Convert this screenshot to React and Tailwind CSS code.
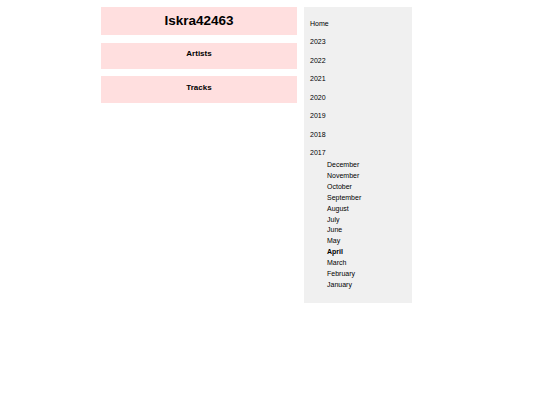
import React from 'react';

const years = ['2023', '2022', '2021', '2020', '2019', '2018'];
const months = ['December', 'November', 'October', 'September', 'August', 'July', 'June', 'May', 'April', 'March', 'February', 'January'];

export default function App() {
  return (
    <div className="min-h-screen bg-white text-black font-['Liberation_Sans',Arial,sans-serif]">
      <div className="flex items-start gap-[7px] pl-[101px] pt-[7px]">
        {/* left column */}
        <div className="w-[196px] flex flex-col">
          <div className="h-[28px] bg-[#ffdfdf] flex items-center justify-center">
            <h1 className="text-[13.5px] font-bold leading-none">Iskra42463</h1>
          </div>
          <div className="mt-[8px] h-[26px] bg-[#ffdfdf] flex justify-center pt-[7px]">
            <h2 className="text-[8px] font-bold leading-none">Artists</h2>
          </div>
          <div className="mt-[7px] h-[27px] bg-[#ffdfdf] flex justify-center pt-[7.5px]">
            <h2 className="text-[8px] font-bold leading-none">Tracks</h2>
          </div>
        </div>

        {/* sidebar */}
        <nav className="w-[108px] bg-[#f0f0f0] pl-[6px] pt-[10.5px] pb-[12.5px] text-[7px]">
          <ul className="flex flex-col gap-[7.5px]">
            <li className="leading-[11px]">Home</li>
            {years.map((y) => (
              <li key={y} className="leading-[11px]">{y}</li>
            ))}
            <li className="leading-[11px]">
              2017
              <ul className="pl-[17px] mt-[2px]">
                {months.map((m) => (
                  <li key={m} className={`leading-[10.9px] ${m === 'April' ? 'font-bold' : ''}`}>{m}</li>
                ))}
              </ul>
            </li>
          </ul>
        </nav>
      </div>
    </div>
  );
}
